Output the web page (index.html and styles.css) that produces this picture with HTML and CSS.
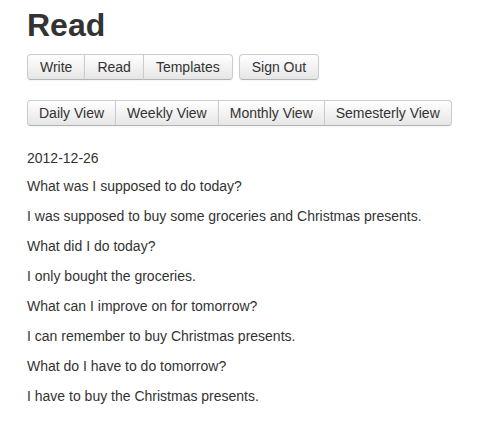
FILE: index.html
```html
<!DOCTYPE html>
<html>
<head>
<meta charset="utf-8">
<link rel="stylesheet" href="styles.css">
</head>
<body>
<div class="container">
  <h1 class="title">Read</h1>
  <div class="toolbar">
    <div class="btn-group">
      <span class="btn">Write</span><span class="btn">Read</span><span class="btn">Templates</span>
    </div>
    <div class="btn-group">
      <span class="btn">Sign Out</span>
    </div>
  </div>
  <div class="toolbar views">
    <div class="btn-group">
      <span class="btn">Daily View</span><span class="btn">Weekly View</span><span class="btn">Monthly View</span><span class="btn">Semesterly View</span>
    </div>
  </div>
  <div class="entry">
    <p class="date">2012-12-26</p>
    <p>What was I supposed to do today?</p>
    <p>I was supposed to buy some groceries and Christmas presents.</p>
    <p>What did I do today?</p>
    <p>I only bought the groceries.</p>
    <p>What can I improve on for tomorrow?</p>
    <p>I can remember to buy Christmas presents.</p>
    <p>What do I have to do tomorrow?</p>
    <p>I have to buy the Christmas presents.</p>
  </div>
</div>
</body>
</html>
```

FILE: styles.css
```css
html, body {
  margin: 0;
  padding: 0;
  background: #fff;
}
body {
  font-family: "Liberation Sans", Arial, sans-serif;
  font-size: 14px;
  line-height: 20px;
  color: #333;
}
.container {
  padding: 0 27px;
}
.title {
  margin: 0;
  padding-top: 6px;
  font-size: 32px;
  line-height: 38px;
  font-weight: bold;
  color: #333;
}
.toolbar {
  display: flex;
  gap: 6px;
  margin-top: 10px;
}
.toolbar.views {
  margin-top: 20px;
}
.btn-group {
  display: flex;
}
.btn {
  display: inline-block;
  white-space: nowrap;
  padding: 4px 12px;
  line-height: 16px;
  font-size: 14px;
  color: #333;
  background: linear-gradient(#ffffff, #e6e6e6);
  border: 1px solid #ccc;
  border-bottom-color: #b3b3b3;
  box-shadow: inset 0 1px 0 rgba(255,255,255,0.2), 0 1px 2px rgba(0,0,0,0.05);
}
.views .btn {
  padding: 4px 11px;
}
.btn + .btn {
  border-left: 1px solid #ccc;
  margin-left: -1px;
}
.btn:first-child {
  border-radius: 4px 0 0 4px;
}
.btn:last-child {
  border-radius: 0 4px 4px 0;
}
.btn:only-child {
  border-radius: 4px;
}
.entry {
  margin-top: 22px;
}
.entry p {
  margin: 0 0 10px;
}
.entry .date {
  margin-bottom: 8px;
}
```
